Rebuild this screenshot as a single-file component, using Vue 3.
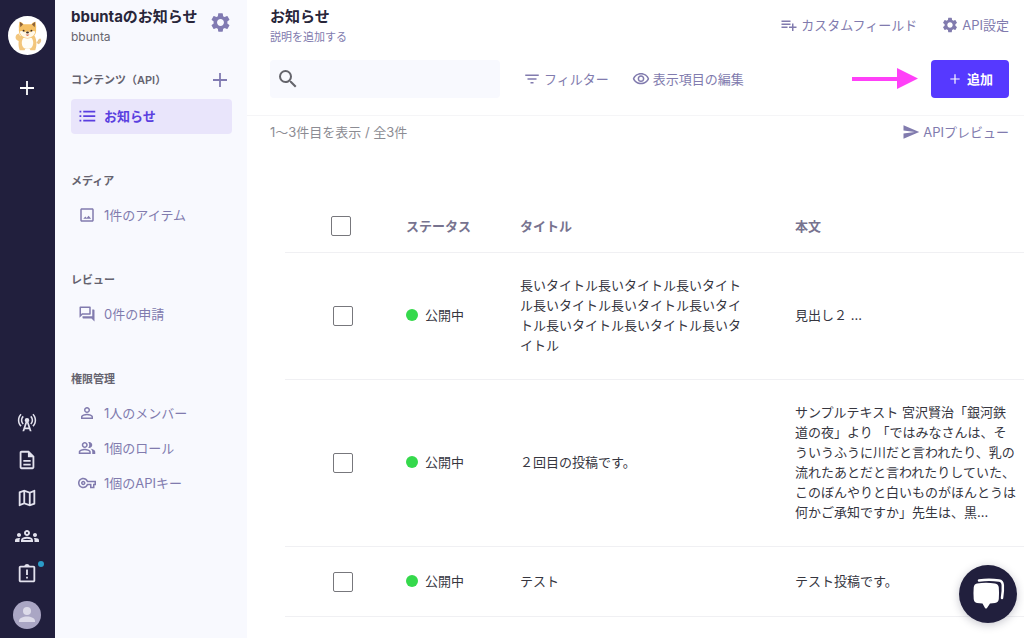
<script setup>
import { ref } from 'vue'

const icons = {
  plus: 'M19 12.9h-6.1V19h-1.8v-6.1H5v-1.8h6.1V5h1.8v6.1H19z',
  gear: 'M19.14 12.94c.04-.3.06-.61.06-.94 0-.32-.02-.64-.07-.94l2.03-1.58a.49.49 0 0 0 .12-.61l-1.92-3.32a.488.488 0 0 0-.59-.22l-2.39.96c-.5-.38-1.03-.7-1.62-.94l-.36-2.54a.484.484 0 0 0-.48-.41h-3.84c-.24 0-.43.17-.47.41l-.36 2.54c-.59.24-1.13.57-1.62.94l-2.39-.96c-.22-.08-.47 0-.59.22L2.74 8.87c-.12.21-.08.47.12.61l2.03 1.58c-.05.3-.09.63-.09.94s.02.64.07.94l-2.03 1.58a.49.49 0 0 0-.12.61l1.92 3.32c.12.22.37.29.59.22l2.39-.96c.5.38 1.03.7 1.62.94l.36 2.54c.05.24.24.41.48.41h3.84c.24 0 .44-.17.47-.41l.36-2.54c.59-.24 1.13-.56 1.62-.94l2.39.96c.22.08.47 0 .59-.22l1.92-3.32c.12-.22.07-.47-.12-.61l-2.01-1.58zM12 15.6c-1.98 0-3.6-1.62-3.6-3.6s1.62-3.6 3.6-3.6 3.6 1.62 3.6 3.6-1.62 3.6-3.6 3.6z',
  tower: 'M7.3 14.7l1.2-1.2c-1-1-1.5-2.3-1.5-3.5 0-1.3.5-2.6 1.5-3.5L7.3 5.3c-1.3 1.3-2 3-2 4.7s.7 3.4 2 4.7zM19.1 2.9l-1.2 1.2c1.6 1.6 2.4 3.8 2.4 5.9s-.8 4.3-2.4 5.9l1.2 1.2c2-2 2.9-4.5 2.9-7.1 0-2.6-1-5.1-2.9-7.1zM6.1 4.1L4.9 2.9C3 4.9 2 7.4 2 10c0 2.6 1 5.1 2.9 7.1l1.2-1.2c-1.6-1.6-2.4-3.8-2.4-5.9s.8-4.3 2.4-5.9zM16.7 14.7c1.3-1.3 2-3 2-4.7-.1-1.7-.7-3.4-2-4.7l-1.2 1.2c1 1 1.5 2.3 1.5 3.5 0 1.3-.5 2.6-1.5 3.5l1.2 1.2zM14.5 10a2.5 2.5 0 0 0-5 0c0 .76.34 1.42.87 1.88L7 22h2l.67-2h4.67l.66 2h2l-3.37-10.12c.53-.46.87-1.12.87-1.88zm-4.17 8L12 13l1.67 5h-3.34z',
  doc: 'M8 16h8v2H8zm0-4h8v2H8zm6-10H6c-1.1 0-2 .9-2 2v16c0 1.1.89 2 1.99 2H18c1.1 0 2-.9 2-2V8l-6-6zm4 18H6V4h7v5h5v11z',
  map: 'M20.5 3l-.16.03L15 5.1 9 3 3.36 4.9c-.21.07-.36.25-.36.48V20.5c0 .28.22.5.5.5l.16-.03L9 18.9l6 2.1 5.64-1.9c.21-.07.36-.25.36-.48V3.5c0-.28-.22-.5-.5-.5zM10 5.47l4 1.4v11.66l-4-1.4V5.47zm-5 .99l3-1.01v11.7l-3 1.16V6.46zm14 11.08l-3 1.01V6.86l3-1.16v11.84z',
  groups: 'M4 13c1.1 0 2-.9 2-2s-.9-2-2-2-2 .9-2 2 .9 2 2 2zm1.130 1.1c-.37-.06-.74-.1-1.13-.1-.99 0-1.93.21-2.78.58A2.01 2.01 0 0 0 0 16.43V18h4.500v-1.61c0-.83.23-1.61.63-2.29zM20 13c1.1 0 2-.9 2-2s-.9-2-2-2-2 .9-2 2 .9 2 2 2zm4 3.43c0-.81-.48-1.53-1.22-1.85A6.95 6.95 0 0 0 20 14c-.39 0-.76.04-1.13.1.4.68.63 1.46.63 2.29V18H24v-1.57zM16.24 13.65c-1.17-.52-2.61-.9-4.24-.9s-3.07.39-4.24.9A2.988 2.988 0 0 0 6 16.39V18h12v-1.61c0-1.18-.68-2.26-1.76-2.74zM8.07 16c.09-.23.13-.39.91-.69.97-.38 1.99-.56 3.02-.56s2.05.18 3.02.56c.77.3.81.46.91.69H8.07zM12 8c.55 0 1 .45 1 1s-.45 1-1 1-1-.45-1-1 .45-1 1-1m0-2c-1.66 0-3 1.34-3 3s1.34 3 3 3 3-1.34 3-3-1.34-3-3-3z',
  late: 'M11 15h2v2h-2zm0-8h2v6h-2zm8-4h-4.18C14.4 1.84 13.3 1 12 1s-2.4.84-2.82 2H5c-1.1 0-2 .9-2 2v14c0 1.1.9 2 2 2h14c1.1 0 2-.9 2-2V5c0-1.1-.9-2-2-2zm0 16H5V5h14v14z',
  list: 'M2 17h2.4v2.2H2zm0-6h2.4v2.2H2zm0-6h2.4v2.2H2zm5 0h16v2.2H7zm0 14.2V17h16v2.2H7zm0-6V11h16v2.2H7z',
  image: 'M19 5v14H5V5h14m0-2H5c-1.1 0-2 .9-2 2v14c0 1.1.9 2 2 2h14c1.1 0 2-.9 2-2V5c0-1.1-.9-2-2-2zm-4.900 9.900l-2.500 3.100-1.800-2.100L7 17h10.500z',
  forum: 'M15 4v7H5.17L4 12.17V4h11m1-2H3c-.55 0-1 .45-1 1v14l4-4h10c.55 0 1-.45 1-1V3c0-.55-.45-1-1-1zm5 4h-2v9H6v2c0 .55.45 1 1 1h11l4 4V7c0-.55-.45-1-1-1z',
  person: 'M12 5.9a2.1 2.1 0 1 1 0 4.2 2.1 2.1 0 0 1 0-4.2m0 9c2.97 0 6.1 1.46 6.1 2.1v1.1H5.9V17c0-.64 3.13-2.1 6.1-2.1M12 4C9.79 4 8 5.79 8 8s1.79 4 4 4 4-1.79 4-4-1.79-4-4-4zm0 9c-2.67 0-8 1.34-8 4v3h16v-3c0-2.66-5.33-4-8-4z',
  people: 'M16.67 13.13C18.04 14.06 19 15.32 19 17v3h4v-3c0-2.18-3.57-3.47-6.33-3.87zM15 12c2.21 0 4-1.79 4-4s-1.79-4-4-4c-.47 0-.91.1-1.33.24C14.5 5.27 15 6.58 15 8s-.5 2.73-1.33 3.76c.42.14.86.24 1.33.24zM9 12c2.21 0 4-1.79 4-4s-1.79-4-4-4-4 1.79-4 4 1.79 4 4 4zm0-6c1.1 0 2 .9 2 2s-.9 2-2 2-2-.9-2-2 .9-2 2-2zm0 7c-2.67 0-8 1.34-8 4v3h16v-3c0-2.66-5.33-4-8-4zm6 5H3v-.99C3.2 16.29 6.3 15 9 15s5.8 1.29 6 2v1z',
  key: 'M22 19h-6v-4h-2.68A6.99 6.99 0 0 1 7 19c-3.86 0-7-3.14-7-7s3.14-7 7-7c2.72 0 5.17 1.58 6.32 4H24v6h-2v4zm-4-2h2v-4h2v-2H11.94l-.23-.67A5.008 5.008 0 0 0 7 7c-2.76 0-5 2.24-5 5s2.24 5 5 5a5.01 5.01 0 0 0 4.71-3.33l.23-.67H18v4zM7 15c-1.65 0-3-1.35-3-3s1.35-3 3-3 3 1.35 3 3-1.35 3-3 3zm0-4c-.55 0-1 .45-1 1s.45 1 1 1 1-.45 1-1-.45-1-1-1z',
  search: 'M15.5 14h-.79l-.28-.27A6.471 6.471 0 0 0 16 9.5 6.5 6.5 0 1 0 9.5 16c1.61 0 3.09-.59 4.23-1.57l.27.28v.79l5 4.99L20.49 19l-4.99-5zm-6 0C7.01 14 5 11.99 5 9.5S7.01 5 9.5 5 14 7.01 14 9.5 11.99 14 9.5 14z',
  filter: 'M10 18h4v-2h-4v2zM3 6v2h18V6H3zm3 7h12v-2H6v2z',
  eye: 'M12 6a9.77 9.77 0 0 1 8.82 5.5C19.17 14.87 15.79 17 12 17s-7.17-2.13-8.82-5.5A9.77 9.77 0 0 1 12 6m0-2C7 4 2.73 7.11 1 11.5 2.73 15.89 7 19 12 19s9.27-3.11 11-7.5C21.27 7.11 17 4 12 4zm0 5a2.5 2.5 0 0 1 0 5 2.5 2.5 0 0 1 0-5m0-2c-2.48 0-4.5 2.02-4.5 4.5S9.52 16 12 16s4.5-2.02 4.5-4.5S14.48 7 12 7z',
  fieldAdd: 'M14 10H2v2h12v-2zm0-4H2v2h12V6zm4 8v-4h-2v4h-4v2h4v4h2v-4h4v-2h-4zM2 16h8v-2H2v2z',
  send: 'M2.01 21L23 12 2.01 3 2 10l15 2-15 2z'
}

const railLinks = [
  { icon: 'tower', label: '更新情報' },
  { icon: 'doc', label: 'ドキュメント' },
  { icon: 'map', label: 'ロードマップ' },
  { icon: 'groups', label: 'コミュニティ' },
  { icon: 'late', label: '通知', badge: true }
]

const sections = [
  { title: 'コンテンツ（API）', addable: true, items: [{ icon: 'list', text: 'お知らせ', active: true }] },
  { title: 'メディア', items: [{ icon: 'image', text: '1件のアイテム' }] },
  { title: 'レビュー', items: [{ icon: 'forum', text: '0件の申請' }] },
  {
    title: '権限管理',
    items: [
      { icon: 'person', text: '1人のメンバー' },
      { icon: 'people', text: '1個のロール' },
      { icon: 'key', text: '1個のAPIキー' }
    ]
  }
]

const query = ref('')
const rows = ref([
  { title: '長いタイトル長いタイトル長いタイトル長いタイトル長いタイトル長いタイトル長いタイトル長いタイトル長いタイトル', body: '見出し２ ...', checked: false },
  { title: '２回目の投稿です。', body: 'サンプルテキスト 宮沢賢治「銀河鉄道の夜」より 「ではみなさんは、そういうふうに川だと言われたり、乳の流れたあとだと言われたりしていた、このぼんやりと白いものがほんとうは何かご承知ですか」先生は、黒...', checked: false },
  { title: 'テスト', body: 'テスト投稿です。', checked: false }
])

function toggleAll(event) {
  rows.value.forEach((row) => { row.checked = event.target.checked })
}
</script>

<template>
  <div class="app">
    <nav class="rail" aria-label="サービス">
      <button class="avatar" type="button" aria-label="サービス切り替え">
        <svg viewBox="0 0 40 40" aria-hidden="true">
          <circle cx="20" cy="20" r="20" fill="#fff" />
          <path d="M9 19c-2 2-2 6 3 7l2-3-3-5z" fill="#f3c67c" />
          <path d="M31 29c3-1 4-5 2-6-2 0-2 3-4 4z" fill="#e9c48a" />
          <path d="M13 20c-3 5-2.500 11-1 15h5l1-2h4l1 2h5c1.500-4 2-10-1-15z" fill="#f3c67c" />
          <path d="M16 22c-3 4-2 9 .5 11h7c2.500-2 3.500-7 .5-11z" fill="#fffdf7" />
          <path d="M12 6c1.500 0 3 1 4 2.500h8C25 7 26.500 6 28 6c1 3 1 5 .8 7 .8 6-3.500 10-8.800 10s-9.600-4-8.800-10C11 11 11 9 12 6z" fill="#f5c065" />
          <path d="M12 6l3.500 2.500-2.800 3zM28 6l-3.500 2.500 2.800 3z" fill="#8a6139" />
          <path d="M12 16c2-1 4-.5 5.500 1 .8-1.500 4.200-1.500 5 0 1.500-1.500 3.500-2 5.500-1-.5 4-4 6.500-8 6.500s-7.500-2.500-8-6.500z" fill="#fff8e8" />
          <circle cx="16" cy="15" r="1" fill="#403025" />
          <circle cx="24" cy="15" r="1" fill="#403025" />
          <ellipse cx="20" cy="17" rx="1.500" ry="1" fill="#403025" />
          <path d="M18 19q2 3 4 0" fill="#d97358" />
        </svg>
      </button>
      <button class="rail-btn" type="button" aria-label="サービスを追加">
        <svg class="i24" viewBox="0 0 24 24"><path :d="icons.plus" /></svg>
      </button>
      <div class="rail-bottom">
        <a v-for="link in railLinks" :key="link.icon" class="rail-btn" href="#" :aria-label="link.label">
          <svg class="i22" viewBox="0 0 24 24" :class="{ wide: link.icon === 'groups' }"><path :d="icons[link.icon]" /></svg>
          <span v-if="link.badge" class="badge"></span>
        </a>
        <button class="user" type="button" aria-label="アカウント">
          <svg viewBox="0 0 28 28" aria-hidden="true">
            <circle cx="14" cy="14" r="14" fill="#aaa6c4" />
            <circle cx="14" cy="10" r="4" fill="#dddbe9" />
            <path d="M6 20c0-6 16-6 16 0v1H6z" fill="#dddbe9" />
          </svg>
        </button>
      </div>
    </nav>

    <aside class="side">
      <div class="service">
        <div>
          <h2>bbuntaのお知らせ</h2>
          <p>bbunta</p>
        </div>
        <button class="plain" type="button" aria-label="サービス設定">
          <svg class="i24" viewBox="0 0 24 24"><path :d="icons.gear" /></svg>
        </button>
      </div>
      <section v-for="section in sections" :key="section.title" class="group">
        <div class="group-head" :class="{ addable: section.addable }">
          <h3>{{ section.title }}</h3>
          <button v-if="section.addable" class="plain" type="button" aria-label="APIを追加">
            <svg class="i24" viewBox="0 0 24 24"><path :d="icons.plus" /></svg>
          </button>
        </div>
        <a v-for="item in section.items" :key="item.text" class="item" :class="{ active: item.active }" href="#">
          <svg class="i18" viewBox="0 0 24 24"><path :d="icons[item.icon]" /></svg>
          <span>{{ item.text }}</span>
        </a>
      </section>
    </aside>

    <main class="main">
      <header class="head">
        <div class="head-top">
          <div>
            <h1>お知らせ</h1>
            <button class="describe" type="button">説明を追加する</button>
          </div>
          <div class="head-links">
            <a class="tool" href="#"><svg class="i18" viewBox="0 0 24 24"><path :d="icons.fieldAdd" /></svg>カスタムフィールド</a>
            <a class="tool" href="#"><svg class="i18" viewBox="0 0 24 24"><path :d="icons.gear" /></svg>API設定</a>
          </div>
        </div>
        <div class="head-tools">
          <label class="search">
            <svg class="i24" viewBox="0 0 24 24"><path :d="icons.search" /></svg>
            <input v-model="query" type="text" aria-label="検索">
          </label>
          <button class="tool" type="button"><svg class="i18" viewBox="0 0 24 24"><path :d="icons.filter" /></svg>フィルター</button>
          <button class="tool" type="button"><svg class="i18" viewBox="0 0 24 24"><path :d="icons.eye" /></svg>表示項目の編集</button>
          <svg class="arrow" viewBox="0 0 66 22" aria-hidden="true"><path d="M0 9h45V0l21 10.500L45 21v-8H0z" /></svg>
          <button class="add" type="button"><svg class="i16" viewBox="0 0 24 24"><path :d="icons.plus" /></svg>追加</button>
        </div>
      </header>

      <div class="summary">
        <span>1〜3件目を表示 / 全3件</span>
        <a class="tool" href="#"><svg class="i18" viewBox="0 0 24 24"><path :d="icons.send" /></svg>APIプレビュー</a>
      </div>

      <div class="table-wrap">
        <table>
          <colgroup>
            <col class="c-check"><col class="c-status"><col class="c-text"><col class="c-text">
          </colgroup>
          <thead>
            <tr>
              <th class="check"><input type="checkbox" aria-label="すべて選択" @change="toggleAll"></th>
              <th>ステータス</th>
              <th>タイトル</th>
              <th>本文</th>
            </tr>
          </thead>
          <tbody>
            <tr v-for="row in rows" :key="row.title">
              <td class="check"><input v-model="row.checked" type="checkbox" :aria-label="row.title"></td>
              <td><span class="status">公開中</span></td>
              <td>{{ row.title }}</td>
              <td>{{ row.body }}</td>
            </tr>
          </tbody>
        </table>
      </div>
    </main>

    <button class="chat" type="button" aria-label="チャットを開く">
      <svg viewBox="0 0 58 58" aria-hidden="true">
        <path d="M20 15.500Q30 14 40 15.500Q43.500 16 43.800 20Q44.200 26 43 33" fill="none" stroke="#fff" stroke-width="2.500" stroke-linecap="round" />
        <path d="M18 18.500Q27 17 36 18.500Q39.500 19 39.800 22.500Q40.300 28 39.800 34Q39.500 37.500 36 38L31 38.500L28 43Q27 44 26 43L23.500 38.500L18 38Q15 37.500 14.700 34Q14.200 28 14.700 22.500Q15 19 18 18.500z" fill="#fff" />
      </svg>
    </button>
  </div>
</template>

<style>
body {
  margin: 0;
  background: #fff;
}
</style>

<style scoped>
.app {
  display: flex;
  min-height: 100vh;
  font-family: Inter, "Noto Sans CJK JP", sans-serif;
  font-size: 13px;
  line-height: 20px;
  color: #36363f;
}
.app * {
  box-sizing: border-box;
}
h1, h2, h3, p {
  margin: 0;
}
button {
  padding: 0;
  border: 0;
  background: none;
  font: inherit;
  color: inherit;
  cursor: pointer;
}
a {
  color: inherit;
  text-decoration: none;
}
svg {
  display: block;
  flex: none;
  fill: currentColor;
}
.i16 { width: 16px; height: 16px; }
.i18 { width: 18px; height: 18px; }
.i22 { width: 22px; height: 22px; }
.i24 { width: 24px; height: 24px; }

.rail {
  flex: none;
  display: flex;
  flex-direction: column;
  align-items: center;
  width: 55px;
  padding: 16px 1px 9px 0;
  background: #211f3d;
  color: #fff;
}
.avatar {
  width: 39px;
  height: 39px;
  margin-bottom: 14px;
}
.rail-btn {
  position: relative;
  display: grid;
  place-items: center;
  width: 38px;
  height: 38px;
}
.rail-bottom {
  display: flex;
  flex-direction: column;
  align-items: center;
  margin-top: auto;
  color: #e3e2ee;
}
.wide {
  width: 24px;
  height: 24px;
}
.badge {
  position: absolute;
  top: 6px;
  right: 2px;
  width: 6px;
  height: 6px;
  border-radius: 50%;
  background: #2b9cc8;
}
.user {
  width: 28px;
  height: 28px;
  margin-top: 8px;
}

.side {
  flex: none;
  width: 192px;
  padding: 7px 15px 20px 16px;
  background: #f8f9fe;
}
.service {
  display: flex;
  justify-content: space-between;
  height: 61px;
  white-space: nowrap;
}
.service h2 {
  font-size: 15px;
  font-weight: 700;
  color: #28263a;
}
.service p {
  font-size: 12px;
  color: #67666f;
}
.plain {
  display: flex;
  align-items: center;
  height: 24px;
  color: #817bb2;
}
.service .plain {
  height: 30px;
}
.service svg {
  width: 23px;
  height: 23px;
}
.group {
  margin-bottom: 37px;
}
.group-head {
  display: flex;
  align-items: center;
  justify-content: space-between;
  height: 20px;
  margin-bottom: 7px;
}
.group-head.addable {
  height: 24px;
}
.group-head h3 {
  font-size: 11px;
  font-weight: 600;
  color: #65636f;
}
.item {
  display: flex;
  align-items: center;
  gap: 8px;
  height: 35px;
  padding: 0 7px 2px;
  border-radius: 4px;
  color: #817bae;
}
.item.active {
  background: #e9e5fb;
  color: #5a3fe0;
  font-weight: 600;
}

.main {
  flex: 1;
  min-width: 0;
}
.head {
  padding: 7px 15px 17px 23px;
  border-bottom: 1px solid #f5f5f7;
}
.head-top,
.summary {
  display: flex;
  justify-content: space-between;
}
.head-top {
  height: 53px;
}
h1 {
  font-size: 15px;
  font-weight: 600;
  color: #28263a;
}
.describe {
  display: block;
  font-size: 11px;
  color: #817bae;
}
.head-links {
  display: flex;
  gap: 24px;
  height: 36px;
}
.tool {
  display: flex;
  align-items: center;
  gap: 3px;
  color: #817bae;
  white-space: nowrap;
}
.head-tools {
  display: flex;
  align-items: center;
  height: 38px;
}
.head-tools .tool {
  margin-left: 23px;
}
.search {
  display: flex;
  align-items: center;
  width: 230px;
  height: 38px;
  padding-left: 6px;
  border-radius: 4px;
  background: #f8f9fe;
  color: #65656c;
}
.search input {
  flex: 1;
  min-width: 0;
  border: 0;
  outline: 0;
  background: none;
  font: inherit;
}
.arrow {
  width: 66px;
  height: 22px;
  margin-left: auto;
  margin-right: 13px;
  fill: #ff40f8;
}
.add {
  display: flex;
  align-items: center;
  justify-content: center;
  gap: 4px;
  width: 78px;
  height: 38px;
  border-radius: 4px;
  background: #5639ff;
  color: #fff;
  font-weight: 600;
}
.summary {
  padding: 6px 15px 0 23px;
  color: #8c8c93;
}

.table-wrap {
  margin-top: 58px;
  padding-left: 38px;
  overflow-x: auto;
  scrollbar-width: none;
}
table {
  table-layout: fixed;
  width: 759px;
  border-collapse: separate;
  border-spacing: 0;
}
.c-check { width: 95px; }
.c-status { width: 114px; }
.c-text { width: 275px; }
th, td {
  padding: 22px 26px 24px;
  border-bottom: 1px solid #f0f0f3;
  text-align: left;
  vertical-align: middle;
}
th {
  height: 53px;
  padding-top: 0;
  padding-bottom: 0;
  font-weight: 600;
  color: #77738f;
  white-space: nowrap;
}
td {
  height: 70px;
}
.check {
  padding: 0 0 0 48px;
}
th.check {
  padding-left: 46px;
}
input[type="checkbox"] {
  appearance: none;
  display: block;
  width: 20px;
  height: 20px;
  margin: 0;
  border: 1px solid #77777c;
  border-radius: 2px;
  background: #fff;
}
input[type="checkbox"]:checked {
  background: #5639ff;
}
.status {
  display: flex;
  align-items: center;
  gap: 7px;
  white-space: nowrap;
}
.status::before {
  content: "";
  width: 12px;
  height: 12px;
  border-radius: 50%;
  background: #35d94c;
}

.chat {
  position: fixed;
  right: 7px;
  bottom: 15px;
  width: 58px;
  height: 58px;
  border-radius: 50%;
  background: #211f3d;
  box-shadow: 0 2px 8px rgba(33, 31, 61, 0.25);
}
</style>
